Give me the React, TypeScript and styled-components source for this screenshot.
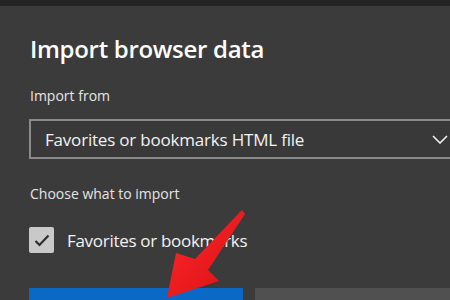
import React from "react";
import styled, { createGlobalStyle } from "styled-components";

const Global = createGlobalStyle`
  html, body { margin: 0; padding: 0; background: #3b3b3b; }
  body { width: 450px; height: 300px; overflow: hidden; font-family: "Open Sans", "Noto Sans", sans-serif; }
  * { box-sizing: border-box; }
`;

const Page = styled.div`
  position: relative;
  width: 450px;
  height: 300px;
  overflow: hidden;
  background: #3b3b3b;
`;

const TopStrip = styled.div`
  height: 6px;
  background: #242424;
`;

const Dialog = styled.div`
  padding: 0 0 0 29px;
  display: flex;
  flex-direction: column;
  align-items: flex-start;
`;

const Title = styled.h1`
  margin: 27px 0 0 1px;
  font-size: 24px;
  font-weight: 600;
  line-height: 32px;
  color: #ffffff;
  letter-spacing: -0.3px;
`;

const Label = styled.div<{ $top: number }>`
  margin-top: ${(p) => p.$top}px;
  margin-left: 1px;
  font-size: 14px;
  line-height: 20px;
  color: #e6e6e6;
`;

const Select = styled.div`
  margin-top: 13px;
  width: 441px;
  height: 40px;
  flex-shrink: 0;
  border: 2px solid #8a8a8a;
  display: flex;
  align-items: center;
  justify-content: space-between;
  padding: 0 20px 0 14px;
  background: #393939;
`;

const SelectText = styled.span`
  font-size: 17px;
  color: #f2f2f2;
  letter-spacing: -0.2px;
`;

const CheckRow = styled.div`
  margin-top: 23px;
  display: flex;
  align-items: center;
  gap: 13px;
`;

const Box = styled.div`
  width: 25px;
  height: 26px;
  border-radius: 2px;
  background: #c9c9c9;
  display: flex;
  align-items: center;
  justify-content: center;
`;

const CheckLabel = styled.span`
  font-size: 17px;
  color: #f2f2f2;
  letter-spacing: -0.3px;
`;

const Buttons = styled.div`
  margin-top: 35px;
  display: flex;
  gap: 12px;
`;

const Button = styled.div<{ $primary?: boolean }>`
  width: ${(p) => (p.$primary ? "214px" : "220px")};
  height: 36px;
  flex-shrink: 0;
  background: ${(p) => (p.$primary ? "#0a69c4" : "#505050")};
`;

const Arrow = styled.svg`
  position: absolute;
  left: 0;
  top: 0;
  pointer-events: none;
`;

export default function App() {
  return (
    <Page>
      <Global />
      <TopStrip />
      <Dialog>
        <Title>Import browser data</Title>
        <Label $top={21}>Import from</Label>
        <Select>
          <SelectText>Favorites or bookmarks HTML file</SelectText>
          <svg width="16" height="9" viewBox="0 0 16 9">
            <path d="M1 1 L8 8 L15 1" fill="none" stroke="#f0f0f0" strokeWidth="1.6" />
          </svg>
        </Select>
        <Label $top={25}>Choose what to import</Label>
        <CheckRow>
          <Box>
            <svg width="16" height="13" viewBox="0 0 16 13">
              <path d="M1.5 7 L5.5 11 L14.5 1.5" fill="none" stroke="#2e2e2e" strokeWidth="2.2" />
            </svg>
          </Box>
          <CheckLabel>Favorites or bookmarks</CheckLabel>
        </CheckRow>
        <Buttons>
          <Button $primary />
          <Button />
        </Buttons>
      </Dialog>
      <Arrow width="450" height="300" viewBox="0 0 450 300">
        <defs>
          <linearGradient id="ag" x1="0" y1="0" x2="1" y2="1">
            <stop offset="0" stopColor="#ff2a2a" />
            <stop offset="1" stopColor="#d80f14" />
          </linearGradient>
        </defs>
        <polygon
          points="242,210 245,214 208,270 219,281 167,298 176,253 195,259"
          fill="url(#ag)"
        />
      </Arrow>
    </Page>
  );
}
